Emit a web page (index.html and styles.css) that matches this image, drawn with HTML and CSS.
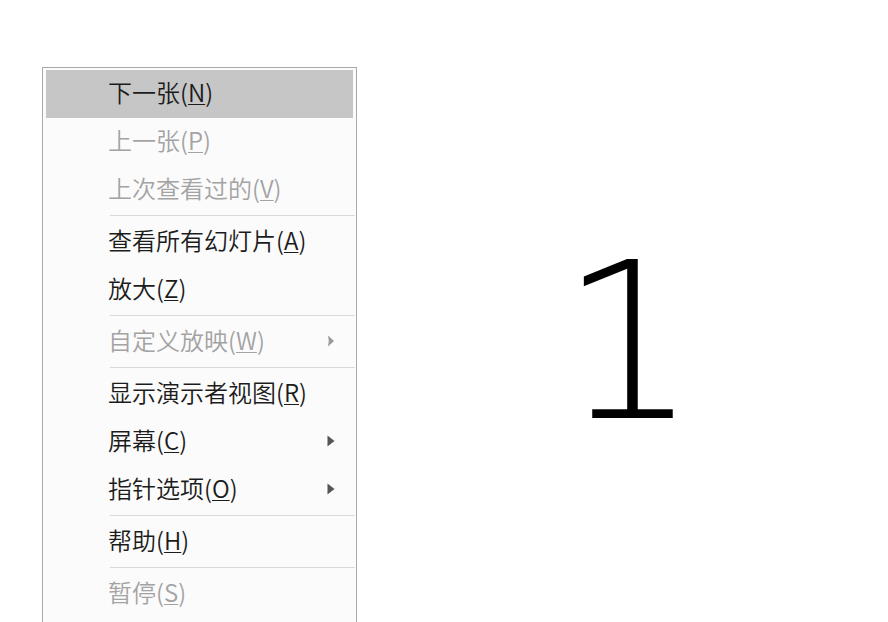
FILE: index.html
```html
<!DOCTYPE html>
<html lang="zh-CN">
<head>
<meta charset="utf-8">
<title>幻灯片放映菜单</title>
<link rel="stylesheet" href="styles.css">
</head>
<body>
<div class="screen">
  <div class="menu">
    <div class="item active"><span class="label">下一张(<u>N</u>)</span></div>
    <div class="item disabled"><span class="label">上一张(<u>P</u>)</span></div>
    <div class="item disabled"><span class="label">上次查看过的(<u>V</u>)</span></div>
    <div class="sep"></div>
    <div class="item"><span class="label">查看所有幻灯片(<u>A</u>)</span></div>
    <div class="item"><span class="label">放大(<u>Z</u>)</span></div>
    <div class="sep"></div>
    <div class="item disabled"><span class="label">自定义放映(<u>W</u>)</span>
      <svg class="arrow" width="8" height="12" viewBox="0 0 8 12"><path d="M1 0.5 L7 6 L1 11.5 Q2.6 6 1 0.5 Z"/></svg></div>
    <div class="sep"></div>
    <div class="item"><span class="label">显示演示者视图(<u>R</u>)</span></div>
    <div class="item"><span class="label">屏幕(<u>C</u>)</span>
      <svg class="arrow" width="8" height="12" viewBox="0 0 8 12"><path d="M0.5 0.5 L7.5 6 L0.5 11.5 Z"/></svg></div>
    <div class="item"><span class="label">指针选项(<u>O</u>)</span>
      <svg class="arrow" width="8" height="12" viewBox="0 0 8 12"><path d="M0.5 0.5 L7.5 6 L0.5 11.5 Z"/></svg></div>
    <div class="sep"></div>
    <div class="item"><span class="label">帮助(<u>H</u>)</span></div>
    <div class="sep"></div>
    <div class="item disabled"><span class="label">暂停(<u>S</u>)</span></div>
  </div>
  <div class="slide">
    <div class="numeral">1</div>
  </div>
</div>
</body>
</html>
```
FILE: styles.css
```css
html, body {
  margin: 0;
  padding: 0;
  background: #ffffff;
  overflow: hidden;
}

.screen {
  display: flex;
  align-items: flex-start;
  width: 888px;
  height: 622px;
  overflow: hidden;
  font-family: "Noto Sans CJK SC", "Noto Sans", sans-serif;
}

.menu {
  margin-left: 42px;
  margin-top: 67px;
  width: 307px;
  padding: 2px 3px 12px;
  border: 1px solid #a9a9a9;
  background: #fbfbfb;
  flex-shrink: 0;
}

.item {
  box-sizing: border-box;
  height: 48px;
  display: flex;
  align-items: center;
  justify-content: space-between;
  padding: 0 18px 6px 62px;
  font-size: 24px;
  font-weight: 350;
  color: #1c1c1c;
  white-space: nowrap;
}

.item.active {
  background: #c6c6c6;
}

.item.disabled {
  color: #a3a3a3;
}

.label u {
  text-decoration-thickness: 1px;
  text-underline-offset: 2px;
}

.arrow {
  fill: #555555;
  flex-shrink: 0;
  margin-top: 4px;
}

.item.disabled .arrow {
  fill: #9a9a9a;
}

.sep {
  height: 1px;
  margin: 1px -2px 2px 64px;
  background: #d9d9d9;
}

.slide {
  flex: 1;
  padding-left: 203px;
  padding-top: 235px;
}

.numeral {
  font-family: "DejaVu Sans", sans-serif;
  font-weight: 200;
  font-size: 217px;
  line-height: 1;
  color: #000000;
}
```
